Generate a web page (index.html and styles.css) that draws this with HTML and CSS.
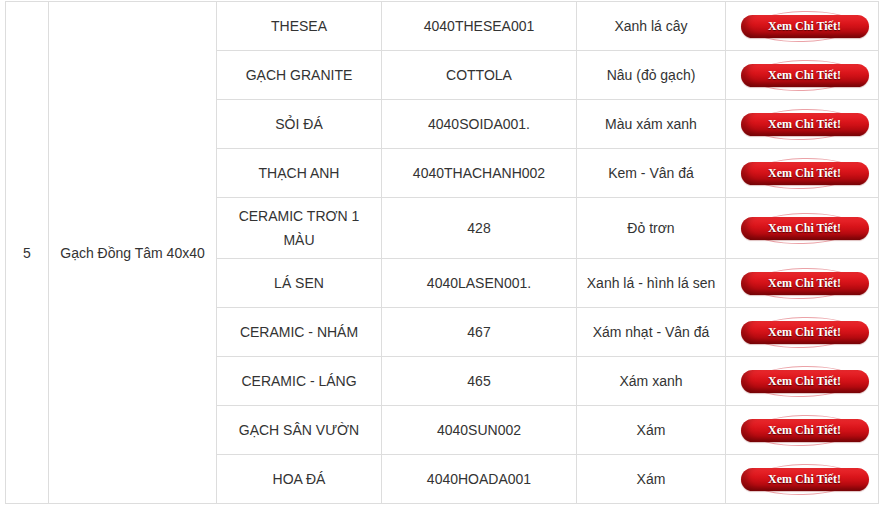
FILE: index.html
```html
<!DOCTYPE html>
<html lang="vi">
<head>
<meta charset="utf-8">
<title>Gạch Đồng Tâm 40x40</title>
<link rel="stylesheet" href="styles.css">
</head>
<body>
<div class="wrap">
<table class="tbl">
  <colgroup>
    <col class="c-no"><col class="c-name"><col class="c-type"><col class="c-code"><col class="c-color"><col class="c-btn">
  </colgroup>
  <tbody>
    <tr>
      <td rowspan="10">5</td>
      <td rowspan="10">Gạch Đồng Tâm 40x40</td>
      <td>THESEA</td><td>4040THESEA001</td><td>Xanh lá cây</td>
      <td class="bc"><a class="btn" href="#">Xem Chi Tiết!</a></td>
    </tr>
    <tr><td>GẠCH GRANITE</td><td>COTTOLA</td><td>Nâu (đỏ gạch)</td><td class="bc"><a class="btn" href="#">Xem Chi Tiết!</a></td></tr>
    <tr><td>SỎI ĐÁ</td><td>4040SOIDA001.</td><td>Màu xám xanh</td><td class="bc"><a class="btn" href="#">Xem Chi Tiết!</a></td></tr>
    <tr><td>THẠCH ANH</td><td>4040THACHANH002</td><td>Kem - Vân đá</td><td class="bc"><a class="btn" href="#">Xem Chi Tiết!</a></td></tr>
    <tr><td>CERAMIC TRƠN 1 MÀU</td><td>428</td><td>Đỏ trơn</td><td class="bc"><a class="btn" href="#">Xem Chi Tiết!</a></td></tr>
    <tr><td>LÁ SEN</td><td>4040LASEN001.</td><td>Xanh lá - hình lá sen</td><td class="bc"><a class="btn" href="#">Xem Chi Tiết!</a></td></tr>
    <tr><td>CERAMIC - NHÁM</td><td>467</td><td>Xám nhạt - Vân đá</td><td class="bc"><a class="btn" href="#">Xem Chi Tiết!</a></td></tr>
    <tr><td>CERAMIC - LÁNG</td><td>465</td><td>Xám xanh</td><td class="bc"><a class="btn" href="#">Xem Chi Tiết!</a></td></tr>
    <tr><td>GẠCH SÂN VƯỜN</td><td>4040SUN002</td><td>Xám</td><td class="bc"><a class="btn" href="#">Xem Chi Tiết!</a></td></tr>
    <tr><td>HOA ĐÁ</td><td>4040HOADA001</td><td>Xám</td><td class="bc"><a class="btn" href="#">Xem Chi Tiết!</a></td></tr>
  </tbody>
</table>
</div>
</body>
</html>
```

FILE: styles.css
```css
html {
  background: #fff;
}
body {
  margin: 0;
  padding: 0;
}
.wrap {
  padding: 1px 0 0 5px;
}
.tbl {
  border-collapse: collapse;
  table-layout: fixed;
  width: 874px;
  font-family: "Liberation Sans", Arial, sans-serif;
  font-size: 14px;
  color: #333;
}
.c-no { width: 43px; }
.c-name { width: 168px; }
.c-type { width: 165px; }
.c-code { width: 195px; }
.c-color { width: 149px; }
.c-btn { width: 153px; }
.tbl td {
  border: 1px solid #ddd;
  text-align: center;
  vertical-align: middle;
  line-height: 24px;
  padding: 6px 8px;
  height: 36px;
}
.tbl td.bc {
  padding-left: 13px;
  padding-right: 8px;
}
.btn {
  position: relative;
  display: block;
  width: 128px;
  height: 23px;
  line-height: 23px;
  margin: 1px auto 0;
  border-radius: 12px;
  background: linear-gradient(to bottom, #ee2a2f 0%, #d9141a 40%, #b90a10 75%, #8e0509 100%);
  box-shadow: inset 6px -3px 6px rgba(60, 0, 0, 0.35), 0 1px 1px rgba(120, 0, 0, 0.25);
  color: #fff;
  font-family: "Liberation Serif", "Times New Roman", serif;
  font-weight: bold;
  font-size: 12px;
  text-decoration: none;
  text-shadow: 0 1px 1px rgba(60, 0, 0, 0.8);
}
.btn::before {
  content: "";
  position: absolute;
  left: 10px;
  right: 14px;
  top: -4px;
  bottom: -4px;
  border: 1px solid rgba(215, 70, 80, 0.5);
  border-radius: 50%;
  transform: rotate(-1.5deg);
  z-index: -1;
}
```
